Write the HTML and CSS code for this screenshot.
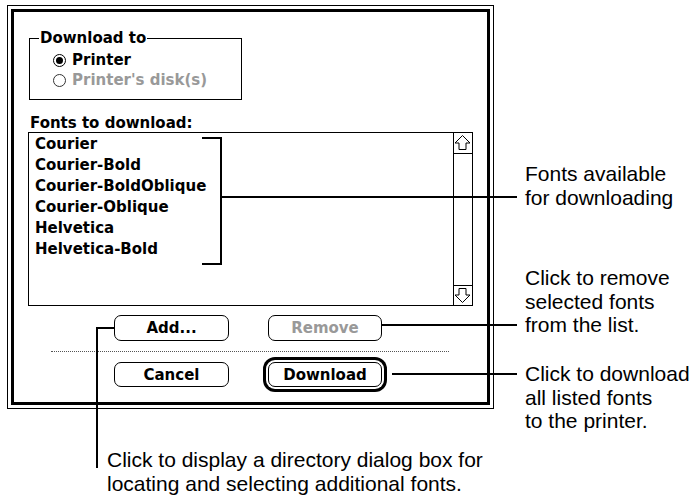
FILE: index.html
```html
<!DOCTYPE html>
<html lang="en">
<head>
  <meta charset="UTF-8">
  <title>Download fonts</title>
  <link rel="stylesheet" href="styles.css">
</head>
<body>
  <div class="sheet">
    <div class="dialog">
      <div class="dialog-inner">
        <fieldset class="group">
          <legend>Download to</legend>
          <label class="radio"><span class="dot on"></span>Printer</label>
          <label class="radio off"><span class="dot"></span>Printer's disk(s)</label>
        </fieldset>

        <div class="list-label">Fonts to download:</div>
        <div class="listbox">
          <ul class="fonts">
            <li>Courier</li>
            <li>Courier-Bold</li>
            <li>Courier-BoldOblique</li>
            <li>Courier-Oblique</li>
            <li>Helvetica</li>
            <li>Helvetica-Bold</li>
          </ul>
          <div class="scrollbar">
            <div class="arrow-up">
              <svg width="18" height="20" viewBox="0 0 18 20"><polygon points="8.5,2.5 16,10 12,10 12,16.5 5,16.5 5,10 1,10" fill="#fff" stroke="#000" stroke-width="1"/></svg>
            </div>
            <div class="track"></div>
            <div class="arrow-down">
              <svg width="18" height="19" viewBox="0 0 18 19"><polygon points="8.5,16.5 16,9 12,9 12,2.5 5,2.5 5,9 1,9" fill="#fff" stroke="#000" stroke-width="1"/></svg>
            </div>
          </div>
        </div>

        <div class="btn-row row-top">
          <button>Add...</button>
          <button class="disabled">Remove</button>
        </div>
        <div class="sep"></div>
        <div class="btn-row row-bottom">
          <button>Cancel</button>
          <button class="default">Download</button>
        </div>
      </div>
    </div>

    <!-- callouts -->
    <div class="bracket"></div>
    <div class="lead lead-fonts"></div>
    <div class="lead lead-remove"></div>
    <div class="lead lead-download"></div>
    <div class="lead-add"></div>

    <div class="note note-fonts">Fonts available<br>for downloading</div>
    <div class="note note-remove">Click to remove<br>selected fonts<br>from the list.</div>
    <div class="note note-download">Click to download<br>all listed fonts<br>to the printer.</div>
    <div class="note note-add">Click to display a directory dialog box for<br>locating and selecting additional fonts.</div>
  </div>
</body>
</html>
```

FILE: styles.css
```css
* { box-sizing: border-box; }
body {
  margin: 0;
  background: #fff;
  color: #000;
  font-family: "DejaVu Sans", sans-serif;
}
.sheet {
  position: relative;
  width: 692px;
  height: 498px;
  overflow: hidden;
}

/* dialog frame */
.dialog {
  margin: 5px 0 0 7px;
  width: 487px;
  height: 404px;
  border: 1px solid #000;
  padding: 3px;
}
.dialog-inner {
  height: 100%;
  border: 3px solid #000;
  font-size: 15px;
  font-weight: bold;
}

/* Download to group */
.group {
  margin: 17px 0 0 15px;
  width: 213px;
  min-width: 0;
  padding: 3px 0 9px 0;
  border: 1px solid #000;
}
.group legend {
  margin-left: 9px;
  padding: 0 1px;
  line-height: 18px;
}
.radio {
  display: flex;
  align-items: center;
  height: 20px;
  line-height: 20px;
  margin-left: 23px;
}
.dot {
  position: relative;
  width: 13px;
  height: 13px;
  margin-right: 6px;
  border: 1px solid #000;
  border-radius: 50%;
}
.dot.on::after {
  content: "";
  position: absolute;
  left: 2px;
  top: 2px;
  width: 7px;
  height: 7px;
  border-radius: 50%;
  background: #000;
}
.radio.off { color: #999; }
.radio.off .dot { border-color: #333; }

/* font list */
.list-label {
  margin: 14px 0 0 16px;
  line-height: 18px;
}
.listbox {
  display: flex;
  margin-left: 14px;
  width: 445px;
  height: 174px;
  border: 1px solid #000;
}
.fonts {
  flex: 1;
  list-style: none;
  margin: 0;
  padding: 1px 0 0 6px;
  line-height: 21px;
}
.scrollbar {
  display: flex;
  flex-direction: column;
  width: 19px;
  border-left: 1px solid #000;
}
.arrow-up {
  height: 21px;
  border-bottom: 1px solid #000;
}
.track { flex: 1; }
.arrow-down {
  height: 20px;
  border-top: 1px solid #000;
}
.scrollbar svg { display: block; }

/* buttons */
.btn-row {
  display: flex;
  gap: 39px;
  margin-left: 100px;
}
.row-top { margin-top: 9px; }
.row-bottom { margin-top: 10px; }
.btn-row button {
  width: 115px;
  height: 26px;
  padding: 0;
  background: #fff;
  color: #000;
  border: 1px solid #000;
  border-radius: 7px;
  font: bold 15px "DejaVu Sans", sans-serif;
}
.row-top button:last-child { width: 114px; }
.row-bottom button { height: 25px; }
.btn-row button.disabled { color: #999; }
.btn-row button.default {
  width: 114px;
  box-shadow: 0 0 0 2px #fff, 0 0 0 5px #000;
}
.sep {
  margin: 10px 0 0 37px;
  width: 398px;
  border-top: 1px dotted #555;
}

/* callouts */
.bracket {
  position: absolute;
  left: 202px;
  top: 137px;
  width: 20px;
  height: 128px;
  border: 2px solid #000;
  border-left: none;
}
.lead {
  position: absolute;
  height: 2px;
  background: #000;
}
.lead-fonts { left: 221px; top: 196px; width: 296px; }
.lead-remove { left: 382px; top: 324px; width: 135px; }
.lead-download { left: 392px; top: 373px; width: 125px; }
.lead-add {
  position: absolute;
  left: 96px;
  top: 327px;
  width: 18px;
  height: 141px;
  border-top: 2px solid #000;
  border-left: 2px solid #000;
}
.note {
  position: absolute;
  font-family: "Liberation Sans", Arial, sans-serif;
  font-size: 21px;
  line-height: 23.5px;
  white-space: nowrap;
}
.note-fonts { left: 525px; top: 162px; }
.note-remove { left: 525px; top: 266px; }
.note-download { left: 525px; top: 362px; }
.note-add { left: 107px; top: 448px; }
```
